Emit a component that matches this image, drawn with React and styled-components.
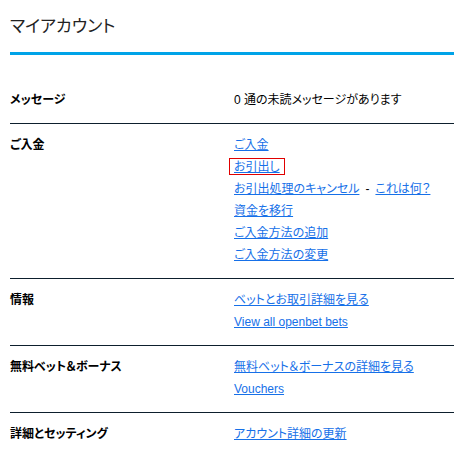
import styled, { createGlobalStyle } from "styled-components";

const GlobalStyle = createGlobalStyle`
  body {
    margin: 0;
    background: #ffffff;
    font-family: "Liberation Sans", "Noto Sans CJK JP", sans-serif;
    font-feature-settings: "palt";
    color: #000000;
  }
`;

const Page = styled.div`
  padding-left: 10px;
`;

const Header = styled.div`
  padding: 15px 0 13px;
  border-bottom: 3px solid #00a3e8;
  margin-bottom: 24px;
`;

const Title = styled.h1`
  margin: 0;
  font-size: 17px;
  line-height: 24px;
  font-weight: normal;
  color: #222222;
`;

const Row = styled.div`
  display: grid;
  grid-template-columns: 224px 1fr;
  padding: 10px 0 12px;
  border-bottom: ${({ last }) => (last ? "none" : "1px solid #0d1f2d")};
  font-size: 12px;
  line-height: 22px;
`;

const Label = styled.div`
  font-weight: bold;
`;

const LinkList = styled.div`
  display: flex;
  flex-direction: column;
`;

const Line = styled.div`
  height: 22px;
`;

const Link = styled.a`
  color: #1670e8;
  text-decoration: underline;
  cursor: pointer;
  ${({ highlighted }) =>
    highlighted &&
    `
    display: inline-block;
    line-height: 14px;
    padding: 1px 4px 0;
    margin-left: -5px;
    border: 1px solid #e00000;
  `}
`;

const Sep = styled.span`
  margin: 0 6px;
`;

const sections = [
  {
    label: "ご入金",
    lines: [
      ["ご入金"],
      ["お引出し"],
      ["お引出処理のキャンセル", "これは何？"],
      ["資金を移行"],
      ["ご入金方法の追加"],
      ["ご入金方法の変更"],
    ],
  },
  {
    label: "情報",
    lines: [["ベットとお取引詳細を見る"], ["View all openbet bets"]],
  },
  {
    label: "無料ベット＆ボーナス",
    lines: [["無料ベット＆ボーナスの詳細を見る"], ["Vouchers"]],
  },
  {
    label: "詳細とセッティング",
    lines: [["アカウント詳細の更新"]],
  },
];

export default function App() {
  return (
    <>
      <GlobalStyle />
      <Page>
        <Header>
          <Title>マイアカウント</Title>
        </Header>
        <Row>
          <Label>メッセージ</Label>
          <div>0 通の未読メッセージがあります</div>
        </Row>
        {sections.map((section, i) => (
          <Row key={section.label} last={i === sections.length - 1}>
            <Label>{section.label}</Label>
            <LinkList>
              {section.lines.map((links) => (
                <Line key={links[0]}>
                  {links.map((text, j) => (
                    <span key={text}>
                      {j > 0 && <Sep>-</Sep>}
                      <Link highlighted={text === "お引出し"}>{text}</Link>
                    </span>
                  ))}
                </Line>
              ))}
            </LinkList>
          </Row>
        ))}
      </Page>
    </>
  );
}
